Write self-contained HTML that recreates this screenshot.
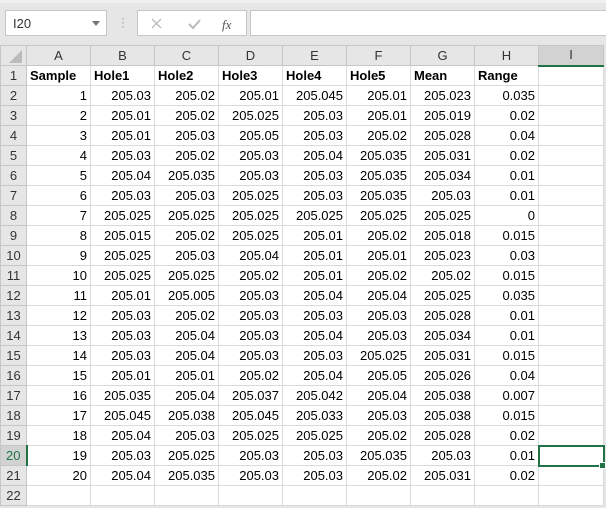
<!DOCTYPE html><html><head><style>
body{margin:0;width:606px;height:508px;overflow:hidden;background:#e6e6e6;font-family:"Liberation Sans",Calibri,sans-serif;position:relative}
.box{position:absolute;background:#fff;border:1px solid #c6c6c6;box-sizing:border-box}
table{position:absolute;left:0;top:45px;border-collapse:collapse;table-layout:fixed;background:#fff}
tr{height:20px}
td{border:1px solid #dadada;padding:0 3px;font-size:13px;line-height:18px;text-align:right;white-space:nowrap;overflow:hidden}
tr.h td{background:#e6e6e6;text-align:center;border-color:#c6c6c6;color:#333}
td.r{background:#e6e6e6;text-align:center;border-color:#c6c6c6;color:#333;padding:0}
tr.b td:not(.r){font-weight:bold;text-align:left}
</style></head><body>
<div style="position:absolute;left:0;top:0;width:606px;height:3px;background:#f0f0f0"></div>
<div class="box" style="left:5px;top:10px;width:102px;height:26px;font-size:13px;padding:5px 0 0 7px;color:#333">I20<span style="position:absolute;right:6px;top:10px;border:4px solid transparent;border-top:5px solid #777"></span></div>
<div style="position:absolute;left:121px;top:16px;color:#999;font-size:12px;line-height:4px">·<br>·<br>·</div>
<div class="box" style="left:137px;top:10px;width:110px;height:26px">
<svg width="110" height="26" style="position:absolute;left:0;top:0"><path d="M14 8l9 9M23 8l-9 9" stroke="#bbb" stroke-width="1.3" fill="none"/><path d="M51 13l4 4 7-8" stroke="#bbb" stroke-width="2" fill="none"/><text x="84" y="18" font-family="Liberation Serif" font-style="italic" font-size="13" fill="#555">fx</text></svg></div>
<div class="box" style="left:250px;top:10px;width:360px;height:26px"></div>
<table>
<colgroup><col style="width:26px"><col style="width:64px"><col style="width:64px"><col style="width:64px"><col style="width:64px"><col style="width:64px"><col style="width:64px"><col style="width:64px"><col style="width:64px"><col style="width:65px"></colgroup>
<tr class="h"><td></td><td>A</td><td>B</td><td>C</td><td>D</td><td>E</td><td>F</td><td>G</td><td>H</td><td style="background:#d2d2d2;border-bottom:2px solid #217346">I</td></tr>
<tr class="b"><td class="r">1</td><td>Sample</td><td>Hole1</td><td>Hole2</td><td>Hole3</td><td>Hole4</td><td>Hole5</td><td>Mean</td><td>Range</td><td></td></tr>
<tr><td class="r">2</td><td>1</td><td>205.03</td><td>205.02</td><td>205.01</td><td>205.045</td><td>205.01</td><td>205.023</td><td>0.035</td><td></td></tr>
<tr><td class="r">3</td><td>2</td><td>205.01</td><td>205.02</td><td>205.025</td><td>205.03</td><td>205.01</td><td>205.019</td><td>0.02</td><td></td></tr>
<tr><td class="r">4</td><td>3</td><td>205.01</td><td>205.03</td><td>205.05</td><td>205.03</td><td>205.02</td><td>205.028</td><td>0.04</td><td></td></tr>
<tr><td class="r">5</td><td>4</td><td>205.03</td><td>205.02</td><td>205.03</td><td>205.04</td><td>205.035</td><td>205.031</td><td>0.02</td><td></td></tr>
<tr><td class="r">6</td><td>5</td><td>205.04</td><td>205.035</td><td>205.03</td><td>205.03</td><td>205.035</td><td>205.034</td><td>0.01</td><td></td></tr>
<tr><td class="r">7</td><td>6</td><td>205.03</td><td>205.03</td><td>205.025</td><td>205.03</td><td>205.035</td><td>205.03</td><td>0.01</td><td></td></tr>
<tr><td class="r">8</td><td>7</td><td>205.025</td><td>205.025</td><td>205.025</td><td>205.025</td><td>205.025</td><td>205.025</td><td>0</td><td></td></tr>
<tr><td class="r">9</td><td>8</td><td>205.015</td><td>205.02</td><td>205.025</td><td>205.01</td><td>205.02</td><td>205.018</td><td>0.015</td><td></td></tr>
<tr><td class="r">10</td><td>9</td><td>205.025</td><td>205.03</td><td>205.04</td><td>205.01</td><td>205.01</td><td>205.023</td><td>0.03</td><td></td></tr>
<tr><td class="r">11</td><td>10</td><td>205.025</td><td>205.025</td><td>205.02</td><td>205.01</td><td>205.02</td><td>205.02</td><td>0.015</td><td></td></tr>
<tr><td class="r">12</td><td>11</td><td>205.01</td><td>205.005</td><td>205.03</td><td>205.04</td><td>205.04</td><td>205.025</td><td>0.035</td><td></td></tr>
<tr><td class="r">13</td><td>12</td><td>205.03</td><td>205.02</td><td>205.03</td><td>205.03</td><td>205.03</td><td>205.028</td><td>0.01</td><td></td></tr>
<tr><td class="r">14</td><td>13</td><td>205.03</td><td>205.04</td><td>205.03</td><td>205.04</td><td>205.03</td><td>205.034</td><td>0.01</td><td></td></tr>
<tr><td class="r">15</td><td>14</td><td>205.03</td><td>205.04</td><td>205.03</td><td>205.03</td><td>205.025</td><td>205.031</td><td>0.015</td><td></td></tr>
<tr><td class="r">16</td><td>15</td><td>205.01</td><td>205.01</td><td>205.02</td><td>205.04</td><td>205.05</td><td>205.026</td><td>0.04</td><td></td></tr>
<tr><td class="r">17</td><td>16</td><td>205.035</td><td>205.04</td><td>205.037</td><td>205.042</td><td>205.04</td><td>205.038</td><td>0.007</td><td></td></tr>
<tr><td class="r">18</td><td>17</td><td>205.045</td><td>205.038</td><td>205.045</td><td>205.033</td><td>205.03</td><td>205.038</td><td>0.015</td><td></td></tr>
<tr><td class="r">19</td><td>18</td><td>205.04</td><td>205.03</td><td>205.025</td><td>205.025</td><td>205.02</td><td>205.028</td><td>0.02</td><td></td></tr>
<tr><td class="r" style="background:#d2d2d2;color:#217346;border-right:2px solid #217346">20</td><td>19</td><td>205.03</td><td>205.025</td><td>205.03</td><td>205.03</td><td>205.035</td><td>205.03</td><td>0.01</td><td style="outline:2px solid #217346;outline-offset:-1px"></td></tr>
<tr><td class="r">21</td><td>20</td><td>205.04</td><td>205.035</td><td>205.03</td><td>205.03</td><td>205.02</td><td>205.031</td><td>0.02</td><td></td></tr>
<tr><td class="r">22</td><td></td><td></td><td></td><td></td><td></td><td></td><td></td><td></td><td></td></tr>
</table>
<svg width="14" height="14" style="position:absolute;left:9px;top:50px"><path d="M13 0V13H0z" fill="#bbb"/></svg>
<div style="position:absolute;left:599px;top:462px;width:5px;height:5px;background:#217346;border:1px solid #fff"></div>
</body></html>
